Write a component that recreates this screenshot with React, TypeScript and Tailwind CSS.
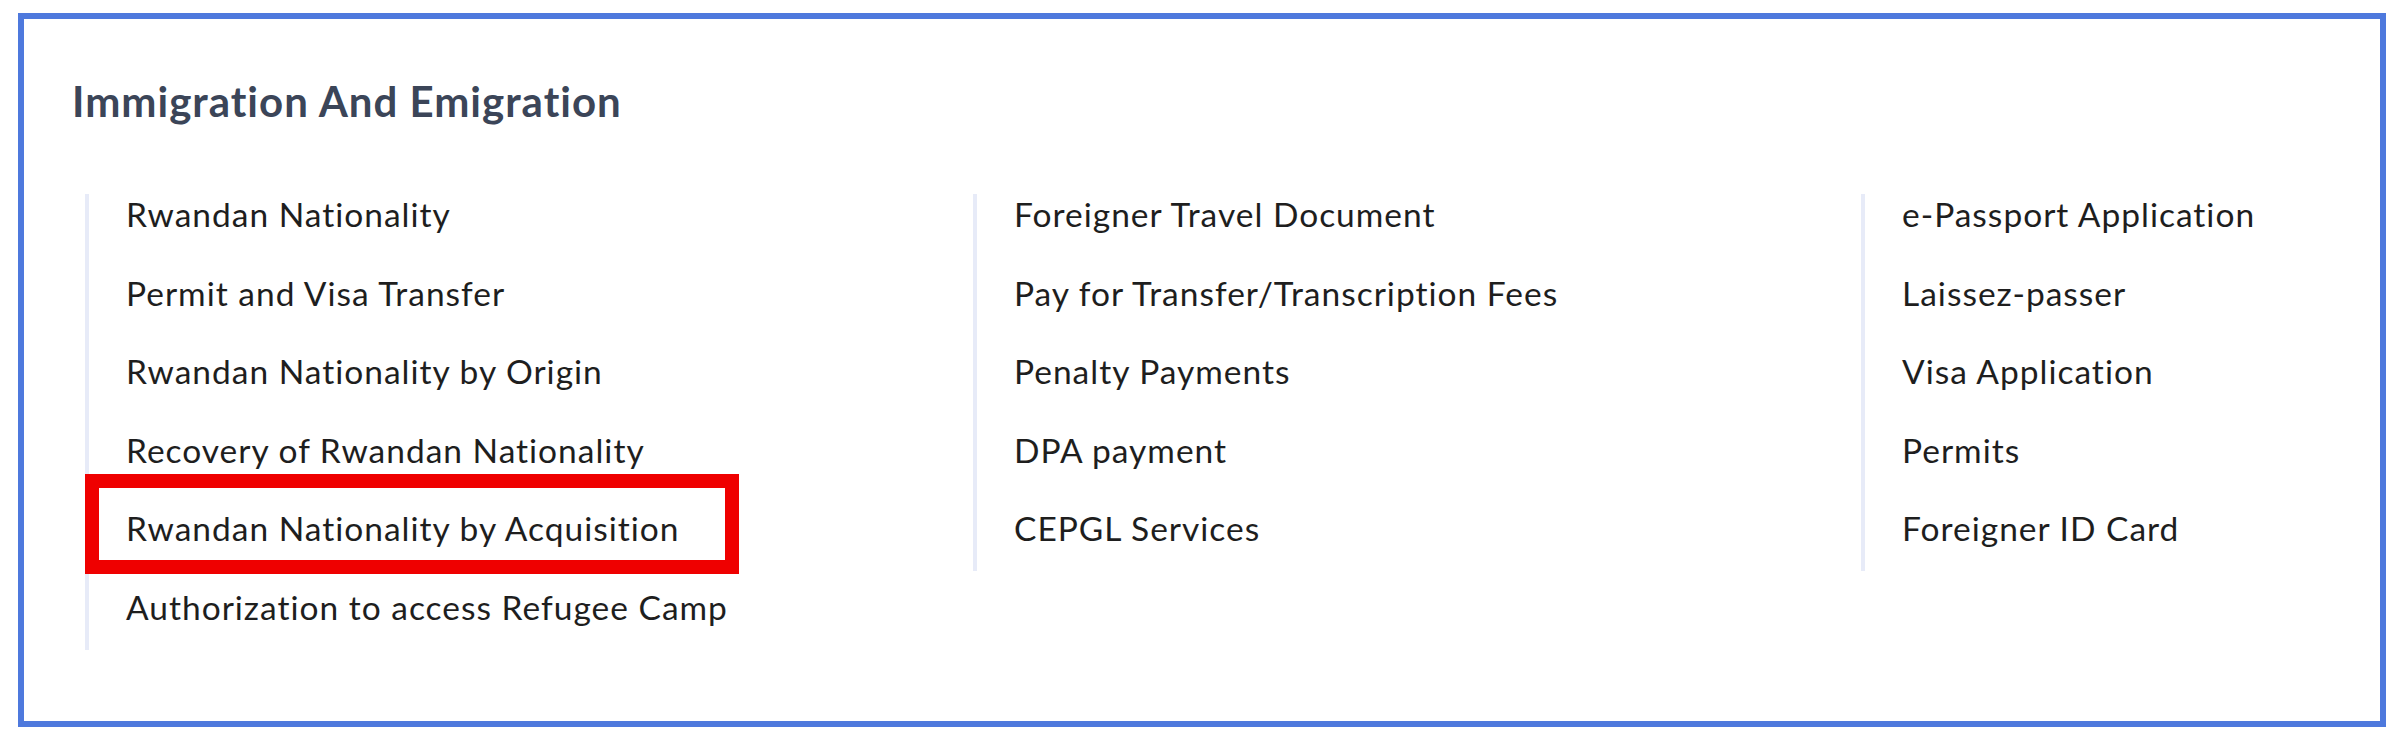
import React from "react";

const col1 = [
  "Rwandan Nationality",
  "Permit and Visa Transfer",
  "Rwandan Nationality by Origin",
  "Recovery of Rwandan Nationality",
  "Rwandan Nationality by Acquisition",
  "Authorization to access Refugee Camp",
];
const col2 = [
  "Foreigner Travel Document",
  "Pay for Transfer/Transcription Fees",
  "Penalty Payments",
  "DPA payment",
  "CEPGL Services",
];
const col3 = [
  "e-Passport Application",
  "Laissez-passer",
  "Visa Application",
  "Permits",
  "Foreigner ID Card",
];

function Column({ items, highlight }: { items: string[]; highlight?: number }) {
  return (
    <ul className="flex flex-col gap-[38.5px] border-l-4 border-[#e7ebf8] pl-[37px] pb-[23px]">
      {items.map((t, i) => (
        <li key={t} className="relative h-[40px] text-[33.5px] leading-[40px] tracking-[1px] text-[#1e1e1e] whitespace-nowrap">
          {t}
          {highlight === i && (
            <span className="pointer-events-none absolute left-[-41px] top-[-34px] h-[100px] w-[654px] border-[14px] border-[#ef0000]" />
          )}
        </li>
      ))}
    </ul>
  );
}

export default function App() {
  return (
    <div className="w-[2394px] h-[738px] bg-white pt-[13px] pl-[18px]" style={{ fontFamily: "Lato, 'Noto Sans', sans-serif" }}>
      <div className="w-[2368px] h-[714px] border-[6px] border-[#4e79dd] pt-[61px] pl-[48px]">
        <h2 className="text-[42px] leading-[42px] font-bold tracking-[1px] text-[#3b4558]">Immigration And Emigration</h2>
        <div className="mt-[72px] ml-[13px] grid grid-cols-[888px_888px_1fr] items-start">
          <Column items={col1} highlight={4} />
          <Column items={col2} />
          <Column items={col3} />
        </div>
      </div>
    </div>
  );
}
